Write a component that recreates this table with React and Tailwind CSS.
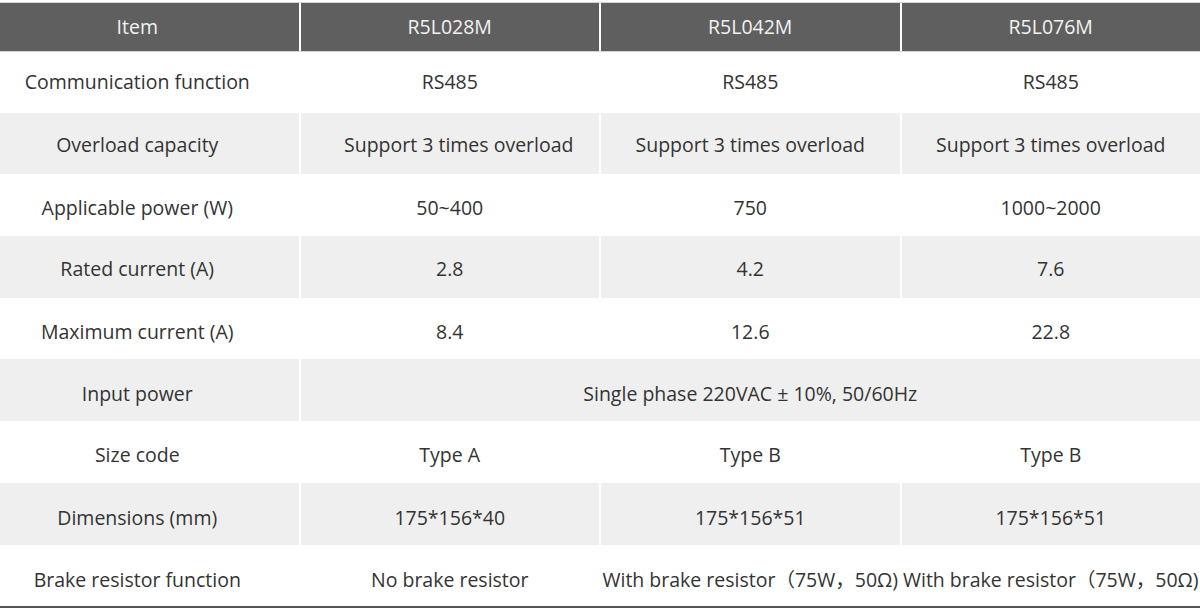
const header = ['Item', 'R5L028M', 'R5L042M', 'R5L076M'];

const rows = [
  ['Communication function', 'RS485', 'RS485', 'RS485'],
  ['Overload capacity', 'Support 3 times overload', 'Support 3 times overload', 'Support 3 times overload'],
  ['Applicable power (W)', '50~400', '750', '1000~2000'],
  ['Rated current (A)', '2.8', '4.2', '7.6'],
  ['Maximum current (A)', '8.4', '12.6', '22.8'],
  ['Input power', 'Single phase 220VAC ± 10%, 50/60Hz'],
  ['Size code', 'Type A', 'Type B', 'Type B'],
  ['Dimensions (mm)', '175*156*40', '175*156*51', '175*156*51'],
  ['Brake resistor function', 'No brake resistor', 'With brake resistor（75W，50Ω)', 'With brake resistor（75W，50Ω)'],
];

// text drifts a little lower row by row in the original
const nudge = ['pt-0', 'pt-[2px]', 'pt-[4px]', 'pt-[4px]', 'pt-[6px]', 'pt-[6px]', 'pt-[6px]', 'pt-[8px]', 'pt-[8px]'];

export default function App() {
  return (
    <div
      className="w-[1200px] h-[609px] bg-white pt-[3px] text-[19.5px] text-[#333]"
      style={{ fontFamily: '"Open Sans", "Noto Sans CJK SC", sans-serif' }}
    >
      <div className="grid grid-cols-4 gap-x-[2px] h-[48px] outline outline-1 outline-[#d4d4d4]">
        {header.map((h, j) => (
          <div
            key={h}
            className={`bg-[#5f5f5f] text-[#f2f2f2] flex items-center justify-center ${j === 0 ? 'pr-[24px]' : ''}`}
          >
            {h}
          </div>
        ))}
      </div>
      {rows.map((r, i) => {
        const shaded = i % 2 === 1;
        const cell = `h-[61.7px] flex items-center justify-center whitespace-nowrap ${nudge[i]} ${shaded ? 'bg-[#efefef]' : 'bg-white'}`;
        return (
          <div key={r[0]} className="grid grid-cols-4 gap-x-[2px]">
            <div className={`${cell} pr-[24px]`}>{r[0]}</div>
            {r.length === 2 ? (
              <div className={`${cell} col-span-3`}>{r[1]}</div>
            ) : (
              r.slice(1).map((c, j) => (
                <div key={j} className={`${cell} ${i === 1 && j === 0 ? 'pl-[18px]' : ''}`}>
                  {c}
                </div>
              ))
            )}
          </div>
        );
      })}
      <div className="h-[2px] bg-[#555]" />
    </div>
  );
}
